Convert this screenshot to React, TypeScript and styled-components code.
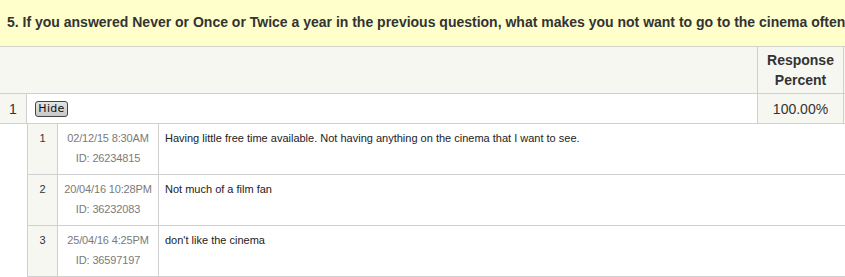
import React from "react";
import styled, { createGlobalStyle } from "styled-components";

const GlobalStyle = createGlobalStyle`
  html, body {
    margin: 0;
    padding: 0;
    overflow: hidden;
    background: #fff;
  }
  body {
    font-family: "Liberation Sans", Arial, sans-serif;
    color: #333;
  }
`;

const Page = styled.div`
  width: 900px;
`;

const QuestionTitle = styled.div`
  height: 47px;
  box-sizing: border-box;
  line-height: 45px;
  padding-left: 7px;
  background: #ffffcc;
  border-bottom: 1px solid #d2d2c8;
  font-size: 14px;
  font-weight: 700;
  white-space: nowrap;
  color: #333;
`;

const Row = styled.div<{ $height: number; $tint?: boolean }>`
  display: flex;
  height: ${(p) => p.$height}px;
  background: ${(p) => (p.$tint ? "#f7f7f2" : "#fff")};
  border-bottom: 1px solid #d0d0d0;
  box-sizing: border-box;
`;

const Spacer = styled.div`
  width: 757px;
  flex: none;
`;

const HeadCell = styled.div`
  width: 85px;
  flex: none;
  border-left: 1px solid #d0d0d0;
  padding-top: 3px;
  text-align: center;
  font-size: 14px;
  font-weight: 700;
  line-height: 20px;
`;

const EdgeCell = styled.div<{ $tint?: boolean }>`
  flex: 1;
  border-left: 1px solid #d0d0d0;
  background: ${(p) => (p.$tint ? "#f7f7f2" : "#fff")};
`;

const IndexCell = styled.div`
  width: 27px;
  flex: none;
  background: #f7f7f2;
  border-right: 1px solid #d0d0d0;
  box-sizing: border-box;
  display: flex;
  align-items: center;
  justify-content: center;
  font-size: 14px;
`;

const ToggleCell = styled.div`
  width: 730px;
  flex: none;
  display: flex;
  align-items: center;
  padding-left: 8px;
  box-sizing: border-box;
`;

const HideButton = styled.button`
  height: 16px;
  width: 33px;
  padding: 0;
  border: 1px solid #444;
  border-radius: 3px;
  background: linear-gradient(#e4e4e4, #c8c8c8);
  font-family: "DejaVu Sans", Verdana, sans-serif;
  font-size: 11px;
  line-height: 13px;
  color: #111;
  letter-spacing: 0.3px;
`;

const PercentCell = styled.div`
  width: 85px;
  flex: none;
  background: #f7f7f2;
  border-left: 1px solid #d0d0d0;
  display: flex;
  align-items: center;
  justify-content: center;
  font-size: 14px;
`;

const Responses = styled.div`
  margin-left: 27px;
  border-left: 1px solid #d0d0d0;
`;

const ResponseRow = styled.div`
  display: flex;
  height: 51px;
  border-bottom: 1px solid #d0d0d0;
  box-sizing: border-box;
  font-size: 11px;
  line-height: 20px;
`;

const ResponseNum = styled.div`
  width: 29px;
  flex: none;
  background: #f7f7f2;
  border-right: 1px solid #d0d0d0;
  text-align: center;
  padding-top: 4px;
  color: #333;
`;

const ResponseMeta = styled.div`
  width: 100px;
  flex: none;
  border-right: 1px solid #d0d0d0;
  text-align: center;
  padding-top: 4px;
  color: #7a7a7a;
  white-space: nowrap;
  letter-spacing: -0.15px;
`;

const ResponseText = styled.div`
  flex: 1;
  padding: 4px 6px 0;
  color: #222;
`;

const responses = [
  {
    date: "02/12/15 8:30AM",
    id: "26234815",
    text: "Having little free time available. Not having anything on the cinema that I want to see.",
  },
  { date: "20/04/16 10:28PM", id: "36232083", text: "Not much of a film fan" },
  { date: "25/04/16 4:25PM", id: "36597197", text: "don't like the cinema" },
];

export default function App() {
  return (
    <Page>
      <GlobalStyle />
      <QuestionTitle>
        5. If you answered Never or Once or Twice a year in the previous question, what makes you not want to go to the cinema often?
      </QuestionTitle>
      <Row $height={47} $tint>
        <Spacer />
        <HeadCell>
          Response
          <br />
          Percent
        </HeadCell>
        <EdgeCell $tint />
      </Row>
      <Row $height={30}>
        <IndexCell>1</IndexCell>
        <ToggleCell>
          <HideButton>Hide</HideButton>
        </ToggleCell>
        <PercentCell>100.00%</PercentCell>
        <EdgeCell $tint />
      </Row>
      <Responses>
        {responses.map((r, i) => (
          <ResponseRow key={r.id}>
            <ResponseNum>{i + 1}</ResponseNum>
            <ResponseMeta>
              {r.date}
              <br />
              ID: {r.id}
            </ResponseMeta>
            <ResponseText>{r.text}</ResponseText>
          </ResponseRow>
        ))}
      </Responses>
    </Page>
  );
}
